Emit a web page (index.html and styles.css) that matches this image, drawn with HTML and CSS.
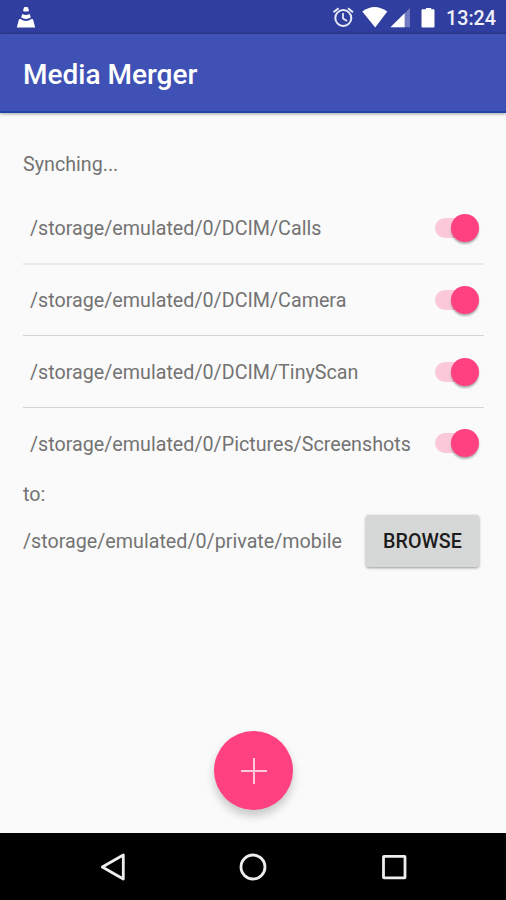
FILE: index.html
```html
<!DOCTYPE html>
<html lang="en">
<head>
    <meta charset="UTF-8">
    <meta name="viewport" content="width=device-width, initial-scale=1.0">
    <link rel="stylesheet" href="styles.css">
    <title>Media Merger</title>
</head>
<body>

    <div class="status-bar">
        <svg class="cone" width="20" height="22" viewBox="0 0 20 22" fill="#fff">
            <path d="M8 1.3q2-.8 4 0l1 3.6q-3 1.4-6 0z"/>
            <path d="M6.3 8q3.7 2 7.4 0l1.1 3.6q-4.8 2.6-9.6 0z"/>
            <path d="M3 13.3l1.6-.3q5.4 4.2 10.8 0l1.6.3 2.2 8.2H.8z"/>
        </svg>
        <div class="status-icons">
            <svg width="114" height="34" viewBox="0 0 114 34">
                <g fill="none" stroke="#e8eaf8" stroke-width="2">
                    <circle cx="11.3" cy="18" r="8"/>
                    <path d="M11 13v5.5l4 2.5" stroke-width="1.7"/>
                    <path d="M1.5 12.3l5-4M21 12.3l-5-4"/>
                </g>
                <path d="M30.3 11.6Q42.5 2.6 55.3 11.6L43.2 27.4z" fill="#fff"/>
                <path d="M78 8v19.3H58.5z" fill="#6f7ac0"/>
                <path d="M72.6 13.3v14H58.5z" fill="#fff"/>
                <path d="M91.5 9.2H94V8h5.2v1.2h2.3q1 0 1 1v16.4q0 1-1 1h-11q-1 0-1-1V10.2q0-1 1-1z" fill="#fff"/>
            </svg>
            <span class="clock">13:24</span>
        </div>
    </div>

    <header>Media Merger</header>

    <main>
        <p class="label">Synching...</p>

        <div class="folders">
            <div class="folder">
                <span>/storage/emulated/0/DCIM/Calls</span>
                <div class="switch"></div>
            </div>
            <div class="folder">
                <span>/storage/emulated/0/DCIM/Camera</span>
                <div class="switch"></div>
            </div>
            <div class="folder">
                <span>/storage/emulated/0/DCIM/TinyScan</span>
                <div class="switch"></div>
            </div>
            <div class="folder">
                <span>/storage/emulated/0/Pictures/Screenshots</span>
                <div class="switch"></div>
            </div>
        </div>

        <p class="label to">to:</p>

        <div class="target">
            <span>/storage/emulated/0/private/mobile</span>
            <button type="button" class="browse">BROWSE</button>
        </div>

        <button type="button" class="fab" aria-label="Add">
            <svg width="26" height="26" viewBox="0 0 26 26" stroke="#ffc9dc" stroke-width="2">
                <path d="M13 0v26M0 13h26"/>
            </svg>
        </button>
    </main>

    <nav>
        <svg width="28" height="28" viewBox="0 0 28 28">
            <path d="M24.3 2v24L3.3 14z"/>
        </svg>
        <svg width="28" height="28" viewBox="0 0 28 28">
            <circle cx="14" cy="14" r="12"/>
        </svg>
        <svg width="28" height="28" viewBox="0 0 28 28">
            <rect x="3.5" y="3.3" width="21.5" height="21.5" rx="0.5"/>
        </svg>
    </nav>

</body>
</html>
```
FILE: styles.css
```css
body {
    font-family: Roboto, sans-serif;
    margin: 0;
    height: 900px;
    display: flex;
    flex-direction: column;
    background-color: #fafafa;
    color: #737373;
    font-size: 19.7px;
    overflow: hidden;
}

.status-bar {
    height: 34px;
    box-sizing: border-box;
    padding: 0 10px 0 16px;
    display: flex;
    justify-content: space-between;
    background: linear-gradient(#303f9f 31px, #2a388d);
}

.cone {
    margin-top: 6px;
}

.status-icons {
    display: flex;
}

.clock {
    width: 50px;
    line-height: 37px;
    color: #f0f1fa;
    font-weight: 500;
    white-space: nowrap;
}

header {
    height: 79px;
    box-sizing: border-box;
    padding-left: 23px;
    line-height: 82px;
    background-color: #3f51b5;
    border-bottom: 2px solid #2144a8;
    box-shadow: 0 1px 3px rgba(0, 0, 0, 0.35);
    color: white;
    font-size: 28px;
    font-weight: 500;
}

main {
    flex: 1;
    padding: 40px 22px 0 23px;
    display: flex;
    flex-direction: column;
}

.label {
    margin: 0;
    line-height: 24px;
}

.folders {
    margin-top: 16px;
}

.folder {
    height: 71.67px;
    box-sizing: border-box;
    padding: 0 5px 0 7px;
    display: flex;
    align-items: center;
    justify-content: space-between;
    border-bottom: 1px solid #d4d4d4;
    white-space: nowrap;
}

.folder span {
    padding-top: 2px;
}

.folder:first-child {
    border-bottom: 2px solid #e9e9e9;
}

.folder:last-child {
    height: 70.67px;
    border-bottom: none;
}

.switch {
    width: 44px;
    height: 20px;
    border-radius: 10px;
    background: linear-gradient(90deg, #fbc8da 36px, transparent 36px);
    display: flex;
    align-items: center;
    justify-content: flex-end;
}

.switch::after {
    content: "";
    width: 28px;
    height: 28px;
    border-radius: 50%;
    background-color: #ff4081;
    box-shadow: 0 2px 2px rgba(0, 0, 0, 0.3);
}

.to {
    margin-top: 4px;
}

.target {
    margin-top: 8px;
    padding-right: 5px;
    display: flex;
    align-items: center;
    justify-content: space-between;
    white-space: nowrap;
}

.target span {
    padding-top: 2px;
}

.browse {
    width: 113px;
    height: 52px;
    padding: 2px 0 0;
    border: none;
    border-radius: 3px;
    background-color: #d6d7d7;
    box-shadow: 0 1px 3px rgba(0, 0, 0, 0.4);
    color: #1c1c1c;
    font-family: inherit;
    font-size: 19.7px;
    font-weight: 500;
}

.fab {
    width: 79px;
    height: 79px;
    margin: auto auto 23px;
    padding: 0;
    border: none;
    border-radius: 50%;
    display: flex;
    align-items: center;
    justify-content: center;
    background-color: #ff4081;
    box-shadow: 0 6px 10px rgba(0, 0, 0, 0.2);
}

nav {
    height: 67px;
    display: flex;
    align-items: center;
    justify-content: center;
    gap: 112.5px;
    background-color: #000;
}

nav svg {
    fill: none;
    stroke: #eee;
    stroke-width: 2.8;
    stroke-linejoin: round;
}
```
